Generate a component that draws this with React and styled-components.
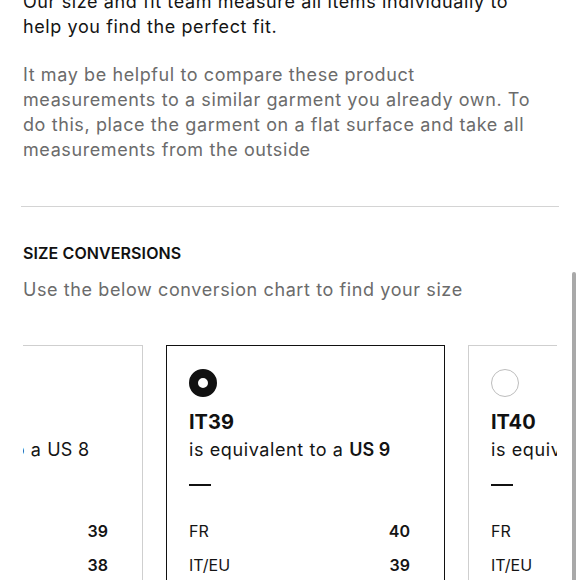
import React from "react";
import styled, { createGlobalStyle } from "styled-components";

const Global = createGlobalStyle`
  html, body { margin: 0; padding: 0; background: #fff; overflow: hidden; }
  body { font-family: Inter, "Noto Sans", sans-serif; color: #111; }
`;

const Page = styled.div`
  position: relative;
  width: 580px;
  height: 580px;
  overflow: hidden;
`;

const Content = styled.div`
  margin-top: -11px;
  padding: 0 23px;
`;

const Lead = styled.p`
  margin: 0;
  font-size: 18px;
  letter-spacing: 0.6px;
  line-height: 25px;
  color: #141414;
  width: 522px;
`;

const Note = styled.p`
  margin: 23px 0 0;
  font-size: 18px;
  letter-spacing: 0.6px;
  line-height: 25px;
  color: #6b6b6b;
  width: 522px;
`;

const Divider = styled.hr`
  margin: 44px -2px 0;
  border: 0;
  border-top: 1px solid #d4d4d4;
`;

const Heading = styled.h3`
  margin: 36px 0 0;
  font-size: 16px;
  line-height: 20px;
  font-weight: 600;
  letter-spacing: 0.1px;
  color: #111;
`;

const Sub = styled.p`
  margin: 16px 0 0;
  font-size: 18px;
  letter-spacing: 0.6px;
  line-height: 22px;
  color: #6b6b6b;
`;

const Carousel = styled.div`
  margin-top: 44px;
  overflow: hidden;
  width: 534px;
`;

const Track = styled.div`
  display: flex;
  gap: 23px;
  margin-left: -159px;
`;

const Card = styled.div`
  flex: 0 0 auto;
  box-sizing: border-box;
  width: 279px;
  height: 300px;
  padding: 23px 34px 0 22px;
  border: ${(p) => (p.$active ? "1.5px solid #111" : "1px solid #cfcfcf")};
  border-bottom: none;
`;

const Radio = styled.div`
  box-sizing: border-box;
  width: 28px;
  height: 28px;
  border-radius: 50%;
  border: ${(p) => (p.$on ? "9px solid #111" : "1px solid #bdbdbd")};
  background: #fff;
`;

const Size = styled.div`
  margin-top: 12px;
  font-size: 20px;
  line-height: 26px;
  font-weight: 700;
  color: #111;
`;

const Equiv = styled.div`
  margin-top: 2px;
  font-size: 18px;
  letter-spacing: 0.6px;
  line-height: 26px;
  color: #141414;
  white-space: nowrap;
`;

const Us = styled.span`
  font-weight: ${(p) => (p.$bold ? 600 : 400)};
  letter-spacing: ${(p) => (p.$bold ? "0" : "0.3px")};
`;

const Dash = styled.div`
  margin-top: 21px;
  width: 22px;
  height: 2px;
  background: #111;
`;

const Rows = styled.div`
  margin-top: 34px;
  display: flex;
  flex-direction: column;
  gap: 12px;
`;

const Row = styled.div`
  display: flex;
  justify-content: space-between;
  font-size: 16px;
  line-height: 22px;
  color: #141414;
  b { font-weight: 600; }
`;

const Scrollbar = styled.div`
  position: absolute;
  right: 4px;
  top: 272px;
  width: 4px;
  height: 320px;
  background: #a9a9a9;
  border-radius: 2px;
`;

const cards = [
  { it: "IT38", us: "8", fr: "39", eu: "38" },
  { it: "IT39", us: "9", fr: "40", eu: "39", active: true },
  { it: "IT40", us: "10", fr: "41", eu: "40" },
];

export default function App() {
  return (
    <Page>
      <Global />
      <Content>
        <Lead>
          Our size and fit team measure all items individually to help you find
          the perfect fit.
        </Lead>
        <Note>
          It may be helpful to compare these product measurements to a similar
          garment you already own. To do this, place the garment on a flat
          surface and take all measurements from the outside
        </Note>
        <Divider />
        <Heading>SIZE CONVERSIONS</Heading>
        <Sub>Use the below conversion chart to find your size</Sub>
        <Carousel>
          <Track>
            {cards.map((c) => (
              <Card key={c.it} $active={c.active}>
                <Radio $on={c.active} />
                <Size>{c.it}</Size>
                <Equiv>
                  is equivalent to a <Us $bold={c.active}>US {c.us}</Us>
                </Equiv>
                <Dash />
                <Rows>
                  <Row>
                    <span>FR</span>
                    <b>{c.fr}</b>
                  </Row>
                  <Row>
                    <span>IT/EU</span>
                    <b>{c.eu}</b>
                  </Row>
                </Rows>
              </Card>
            ))}
          </Track>
        </Carousel>
      </Content>
      <Scrollbar />
    </Page>
  );
}
